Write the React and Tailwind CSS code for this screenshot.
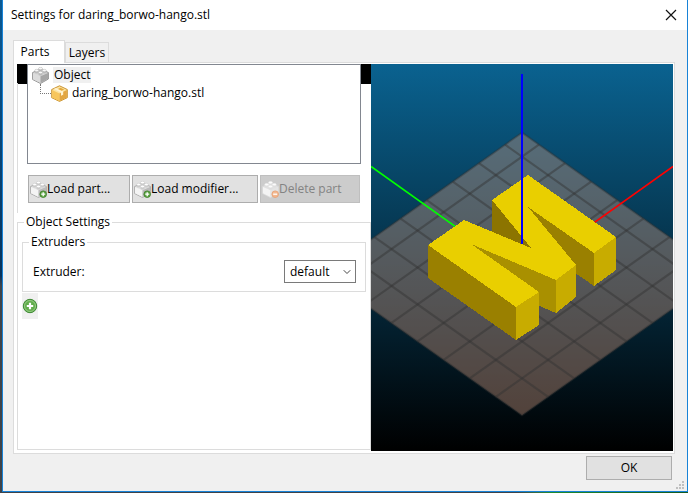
import React, { useState } from 'react';
import { ChevronDown } from 'lucide-react';

// Small lego-like brick, used by the tree and the part buttons
const BrickIcon = ({ tone = 'gray', badge, className = '' }) => {
  const tones = {
    gray: { top: '#d6d6d6', left: '#dcdcdc', right: '#a6a6a6', line: '#8c8c8c', side: '#bcbcbc', stud: '#f8f8f8' },
    light: { top: '#e0e0e0', left: '#f4f4f4', right: '#bababa', line: '#a8a8a8', side: '#cccccc', stud: '#ffffff' },
    faded: { top: '#e2e2e2', left: '#f4f4f4', right: '#e4e4e4', line: '#dadada', side: '#dedede', stud: '#fbfbfb' },
  };
  const c = tones[tone];

  return (
    <svg viewBox="0 0 17 17" className={`shrink-0 ${className}`} aria-hidden="true">
      <path d="M.6 5.500 8.500 2 16.400 5.500v6.500L8.500 16.500.6 12.500z" fill={c.top} stroke={c.line} strokeWidth="0.9" strokeLinejoin="round" />
      <path d="M1 5.900 8.500 9.200v6.800L1 12.300z" fill={c.left} />
      <path d="M8.500 9.200 16 5.900v5.900l-7.500 4.200z" fill={c.right} />
      {[[8.5, 1.8], [4.7, 3.8], [12.3, 3.8], [8.5, 5.8]].map(([x, y]) => (
        <g key={`${x}-${y}`}>
          <path d={`M${x - 2} ${y - 0.3}v2a2 1.100 0 0 0 4 0v-2z`} fill={c.side} />
          <ellipse cx={x} cy={y - 0.3} rx="2" ry="1.200" fill={c.stud} stroke={c.line} strokeWidth="0.3" />
        </g>
      ))}
      {badge === 'add' && (
        <g>
          <circle cx="13.200" cy="13.200" r="3.300" fill="#5fa646" stroke="#3c7d27" strokeWidth="0.8" />
          <path d="M11.200 13.200h4M13.200 11.200v4" stroke="#fff" strokeWidth="1.300" />
        </g>
      )}
      {badge === 'remove' && (
        <g>
          <circle cx="13.200" cy="13.200" r="3.300" fill="#f3b88f" stroke="#e5a073" strokeWidth="0.8" />
          <path d="M11.200 13.200h4" stroke="#fff" strokeWidth="1.300" />
        </g>
      )}
    </svg>
  );
};

const PackageIcon = ({ className = '' }) => (
  <svg viewBox="0 0 17 17" className={`shrink-0 ${className}`} aria-hidden="true">
    <path d="M8.500.8 16.300 4.500v8.200l-7.800 3.700L.7 12.700V4.500z" fill="#fbe3a0" stroke="#c58a22" strokeWidth="0.9" strokeLinejoin="round" />
    <path d="M1.100 5 8.500 8.500v7.400l-7.400-3.500z" fill="#f7c65c" />
    <path d="M8.500 8.500 15.900 5v7.400l-7.400 3.500z" fill="#e3a640" />
    <path d="M2.800 3.900 5 2.900l7.200 3.400v3.500L10 10.800V7.500z" fill="#fff3cf" />
    <path d="m7 4 2.500-1.300 3.700 1.800L10.700 5.800z" fill="#e5a93c" />
  </svg>
);

const AddIcon = () => (
  <svg viewBox="0 0 16 16" className="h-4 w-4" aria-hidden="true">
    <circle cx="8" cy="8" r="6.700" fill="#62ad4c" stroke="#3e8a34" />
    <circle cx="8" cy="8" r="5.500" fill="none" stroke="#a3d394" strokeWidth="0.8" />
    <path d="M4.800 8h6.400M8 4.800v6.400" stroke="#fff" strokeWidth="2.200" />
  </svg>
);

// Bed grid: isometric lattice around the bed centre
const CENTER = { x: 151, y: 203.5 };
const STEP = { x: 26.1, y: 18.47 };
const EDGE = { min: -7.3, max: 8 };

const project = (u, v) => ({
  x: CENTER.x + ((u - v) / 2) * STEP.x,
  y: CENTER.y + ((u + v) / 2) * STEP.y,
});

const gridLines = [-6, -4, -2, 0, 2, 4, 6].flatMap(n => [
  [project(n, EDGE.min), project(n, EDGE.max)],
  [project(EDGE.min, n), project(EDGE.max, n)],
]);

const bedCorners = [
  project(EDGE.min, EDGE.min),
  project(EDGE.max, EDGE.min),
  project(EDGE.max, EDGE.max),
  project(EDGE.min, EDGE.max),
];

const Preview = () => (
  <div className="min-w-0 flex-1 bg-linear-to-b/srgb from-[#0a6290] to-black">
    <svg viewBox="0 0 302 387" preserveAspectRatio="xMidYMid slice" className="block h-full w-full" role="img" aria-label="3D preview">
      <polygon points={bedCorners.map(p => `${p.x},${p.y}`).join(' ')} fill="#cc997f" fillOpacity="0.4" stroke="#333" strokeOpacity="0.4" strokeWidth="2" />
      {gridLines.map(([a, b], i) => (
        <line key={i} x1={a.x} y1={a.y} x2={b.x} y2={b.y} stroke="#333" strokeOpacity="0.45" strokeWidth="2.200" />
      ))}
      <path d="M0 102.500 151 210" stroke="#0f0" strokeWidth="1.600" />
      <path d="M302 102.500 151 210" stroke="#f00" strokeWidth="1.600" />
      <g shapeRendering="crispEdges">
        <path d="M121 136 160 184V216L121 169z" fill="#8c7400" />
        <path d="M157 143 223 189V222L157 176z" fill="#9a8000" />
        <path d="M223 189 245 173V206L223 222z" fill="#c8ac00" />
        <path d="M100 180 185 216V249L100 213z" fill="#a99000" />
        <path d="M185 216 205 201V233L185 249z" fill="#c8ac00" />
        <path d="M57 181 93 156 160 184 121 136 157 111 245 173 223 189 157 143 205 201 185 216 100 180 168 228 145 243z" fill="#e9cf00" />
        <path d="M57 181 145 243V276L57 214z" fill="#9a8000" />
        <path d="M145 243 168 228V261L145 276z" fill="#c8ac00" />
        <path d="M151 10V180" stroke="#00f" strokeWidth="2" />
      </g>
    </svg>
  </div>
);

const TitleBar = () => (
  <header className="flex h-[30px] shrink-0 items-center justify-between bg-white px-2">
    <h1>Settings for daring_borwo-hango.stl</h1>
    <button aria-label="Close" className="flex h-4 w-4 items-center justify-center">
      <svg viewBox="0 0 12 12" className="h-3 w-3" aria-hidden="true">
        <path d="m1 1 10 10M11 1 1 11" stroke="#111" strokeWidth="1.200" />
      </svg>
    </button>
  </header>
);

const PartsTree = () => (
  <ul className="h-[100px] border border-[#828790] bg-white pt-px pl-1">
    <li>
      <div className="flex h-[18px] items-center gap-1">
        <BrickIcon className="h-[17px] w-[17px]" />
        <span className="bg-[#f0f0f0] px-px">Object</span>
      </div>
      <ul className="pl-2">
        <li className="flex h-[18px] items-center">
          <span className="h-[10px] w-[11px] self-start border-b border-l border-dotted border-[#777]" />
          <PackageIcon className="mr-1 h-[17px] w-[17px]" />
          <span>daring_borwo-hango.stl</span>
        </li>
      </ul>
    </li>
  </ul>
);

const buttons = [
  { label: 'Load part...', tone: 'light', badge: 'add', width: 'w-[102px]' },
  { label: 'Load modifier...', tone: 'light', badge: 'add', width: 'w-[126px]' },
  { label: 'Delete part', tone: 'faded', badge: 'remove', width: 'w-[100px]', disabled: true },
];

const ObjectPanel = () => (
  <section className="h-[149px] bg-linear-to-b from-black from-[20px] to-white to-[20px]">
    <div className="flex h-full flex-col border-l border-[#dcdcdc] pr-[10px] pl-[9px] [border-image:linear-gradient(#000_20px,#dcdcdc_20px)_1]">
      <PartsTree />
      <div className="mt-[11px] flex gap-0.5 pl-px">
        {buttons.map(({ label, tone, badge, width, disabled }) => (
          <button
            key={label}
            disabled={disabled}
            className={`flex h-7 shrink-0 items-center border pl-px ${width} ${
              disabled
                ? 'border-[#bfbfbf] bg-[#cccccc] text-[#838383]'
                : 'border-[#adadad] bg-[#e1e1e1]'
            }`}
          >
            <BrickIcon tone={tone} badge={badge} className="h-[17px] w-[17px]" />
            <span className="whitespace-nowrap">{label}</span>
          </button>
        ))}
      </div>
    </div>
  </section>
);

const ObjectSettings = () => (
  <fieldset className="mb-px flex-1 border border-[#dcdcdc] px-1 pb-1">
    <legend className="ml-0.5 px-0.5 leading-[18px]">Object Settings</legend>
    <fieldset className="mt-0.5 h-[59px] border border-[#dcdcdc] pr-[9px] pl-[10px]">
      <legend className="-ml-1 px-0.5 leading-[18px]">Extruders</legend>
      <div className="mt-[9px] flex items-center justify-between">
        <label htmlFor="extruder">Extruder:</label>
        <div className="relative">
          <select id="extruder" className="block h-[23px] w-[72px] appearance-none border border-[#7a7a7a] bg-white pl-[5px]">
            <option>default</option>
            <option>1</option>
          </select>
          <ChevronDown className="pointer-events-none absolute top-[6px] right-[3px] h-3 w-3 text-[#444]" />
        </div>
      </div>
    </fieldset>
    <button aria-label="Add setting" className="mt-px flex h-[26px] w-4 items-center justify-center bg-[#f0f0f0]">
      <AddIcon />
    </button>
  </fieldset>
);

const ResizeGrip = () => (
  <svg viewBox="0 0 8 8" className="absolute right-[3px] bottom-0.5 h-2 w-2" fill="#bfbfbf" aria-hidden="true">
    <path d="M6 0h2v2H6zM3 3h2v2H3zM6 3h2v2H6zM0 6h2v2H0zM3 6h2v2H3zM6 6h2v2H6z" />
  </svg>
);

const App = () => {
  const [tab, setTab] = useState('Parts');

  return (
    <div className="flex h-screen flex-col bg-linear-to-b from-[#0b5a94] from-0% via-[#06335c] via-56% to-[#3e434a] to-58% pl-0.5 font-['Open_Sans','Noto_Sans',sans-serif] text-[12px] leading-4 text-black">
      <div className="relative flex min-h-0 flex-1 flex-col border-r border-b border-l border-[#1883d7] bg-[#f0f0f0]">
        <TitleBar />

        <main className="flex min-h-0 flex-1 flex-col pt-[10px] pr-3 pl-[10px]">
          <div role="tablist" className="flex h-[22px] items-end">
            {['Parts', 'Layers'].map(name => (
              <button
                key={name}
                role="tab"
                aria-selected={tab === name}
                onClick={() => setTab(name)}
                className={
                  tab === name
                    ? 'relative -mb-px h-[23px] w-[52px] border border-b-0 border-[#dcdcdc] bg-white pr-2'
                    : 'h-5 w-11 border border-b-0 border-[#dcdcdc] bg-[#f0f0f0]'
                }
              >
                {name}
              </button>
            ))}
          </div>

          <div role="tabpanel" className="flex min-h-0 flex-1 border border-[#dcdcdc] bg-white pt-px pr-px pb-0.5 pl-[3px]">
            <div className="flex w-[354px] shrink-0 flex-col">
              <ObjectPanel />
              <ObjectSettings />
            </div>
            <Preview />
          </div>
        </main>

        <footer className="flex h-[37px] shrink-0 items-start justify-end pt-0.5 pr-[15px]">
          <button className="h-6 w-[86px] border border-[#adadad] bg-[#e1e1e1]">OK</button>
        </footer>
        <ResizeGrip />
      </div>
      {/* strip of desktop below the dialog */}
      <div className="h-px bg-linear-to-r from-[#3e434a] from-75% via-[#1f8a2e] via-80% to-[#14591f]" />
    </div>
  );
};

export default App;
